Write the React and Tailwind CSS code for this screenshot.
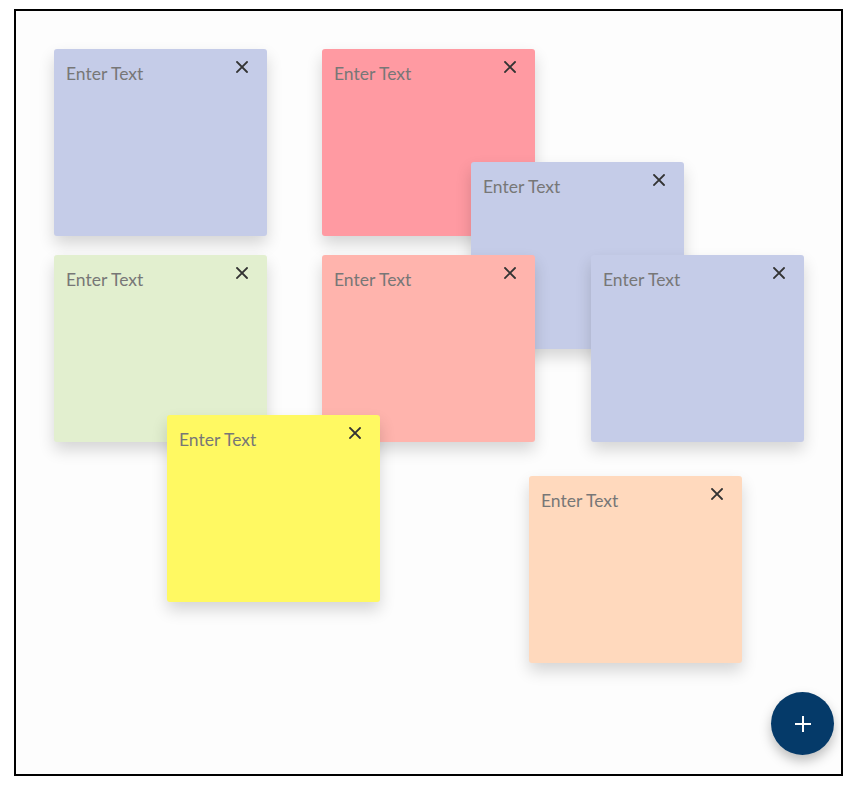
const notes = [
  { id: 1, color: 'bg-[#c5cce8]', x: 38, y: 38 },
  { id: 2, color: 'bg-[#ff9aa2]', x: 306, y: 38 },
  { id: 3, color: 'bg-[#c5cce8]', x: 455, y: 151 },
  { id: 4, color: 'bg-[#e2efcf]', x: 38, y: 244 },
  { id: 5, color: 'bg-[#ffb4ad]', x: 306, y: 244 },
  { id: 6, color: 'bg-[#c5cce8]', x: 575, y: 244 },
  { id: 7, color: 'bg-[#fff962]', x: 151, y: 404 },
  { id: 8, color: 'bg-[#ffd9bd]', x: 513, y: 465 },
];

function Note({ color, x, y }) {
  return (
    <div
      className={`absolute w-[212.5px] h-[187px] rounded-[3px] shadow-[0_8px_16px_rgba(0,0,0,0.16)] ${color}`}
      style={{ left: x, top: y }}
    >
      <textarea
        placeholder="Enter Text"
        className="w-full h-full resize-none bg-transparent pl-3 pr-10 pt-[12px] text-[17.5px] text-[#444] placeholder:text-[#777] outline-none font-['Lato',sans-serif]"
      />
      <button className="absolute right-[19px] top-[12px] w-[12px] h-[12px] text-[#333]">
        <svg viewBox="0 0 12 12" width="12" height="12" stroke="currentColor" strokeWidth="1.8" strokeLinecap="square">
          <path d="M1 1L11 11M11 1L1 11" />
        </svg>
      </button>
    </div>
  );
}

export default function App() {
  return (
    <div className="pt-[9px] pl-[14px]">
      <div className="relative w-[829px] h-[767px] border-2 border-black bg-[#fdfdfd]">
        {notes.map((n) => (
          <Note key={n.id} {...n} />
        ))}
        <button className="absolute left-[755px] top-[681px] w-[63px] h-[63px] rounded-full bg-[#053a69] flex items-center justify-center shadow-[0_6px_12px_rgba(0,0,0,0.25)]">
          <svg viewBox="0 0 16 16" width="16" height="16" stroke="white" strokeWidth="2">
            <path d="M8 0V16M0 8H16" />
          </svg>
        </button>
      </div>
    </div>
  );
}
